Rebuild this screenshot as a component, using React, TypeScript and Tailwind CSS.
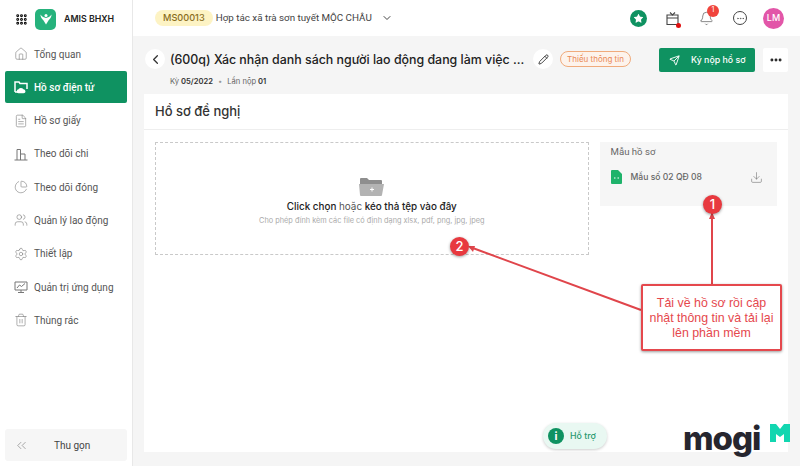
import { ChevronDown, ChevronLeft, ChevronsLeft, Download, Ellipsis, Bell, Send, Pencil, Home, FileText, PieChart, Users, Settings, Trash2, Star, Grip } from 'lucide-react';
import type { ReactNode } from 'react';

// ─── Hand-drawn sidebar icons (no package has these) ──────────────────────────

function Glyph({ children }: { children: ReactNode }) {
  return (
    <svg width="14" height="14" viewBox="0 0 14 14" fill="none" stroke="currentColor" strokeWidth="1">
      {children}
    </svg>
  );
}

const FolderImage = () => (
  <svg width="14" height="14" viewBox="0 0 14 14" fill="none" stroke="currentColor" strokeWidth="1.5">
    <path d="M1 12V2h4l1 1.5h7V9" />
    <path d="M1 12h3" />
    <path d="M4.5 12.5c-1.5 0-1.5-2.5.3-2.5.5-1.8 3.7-1.8 4.2 0 1.8-.3 2.5 2.5.5 2.5z" fill="currentColor" />
  </svg>
);

const Chart = () => (
  <Glyph>
    <path d="M0.5 13h13" />
    <path d="M3 13V2.5h3.5V13" />
    <path d="M6.5 7H11V13" />
  </Glyph>
);

const Monitor = () => (
  <Glyph>
    <path d="M1 2h12v8H1z" />
    <path d="M3 8l2.5-3 2 1.5L11 3.5" />
    <path d="M7 10v2M4 12.5h6" />
  </Glyph>
);

// ─── Sidebar ──────────────────────────────────────────────────────────────────

const NAV = [
  { label: 'Tổng quan', icon: <Home size={14} strokeWidth={1} /> },
  { label: 'Hồ sơ điện tử', icon: <FolderImage />, active: true },
  { label: 'Hồ sơ giấy', icon: <FileText size={14} strokeWidth={1} /> },
  { label: 'Theo dõi chi', icon: <Chart /> },
  { label: 'Theo dõi đóng', icon: <PieChart size={14} strokeWidth={1} /> },
  { label: 'Quản lý lao động', icon: <Users size={14} strokeWidth={1} /> },
  { label: 'Thiết lập', icon: <Settings size={14} strokeWidth={1} /> },
  { label: 'Quản trị ứng dụng', icon: <Monitor /> },
  { label: 'Thùng rác', icon: <Trash2 size={14} strokeWidth={1} /> },
];

function Sidebar() {
  return (
    <aside className="flex h-full w-[133px] shrink-0 flex-col border-r border-[#e8e8e8] bg-white font-['Roboto',sans-serif]">
      <div className="flex h-[38px] shrink-0 items-center pl-[15px]">
        <Grip size={13} strokeWidth={3.4} className="text-[#111]" />
        <div className="ml-[7px] flex h-[21px] w-[21px] items-center justify-center rounded-[5px] bg-[#26b27c]">
          <svg width="14" height="14" viewBox="0 0 14 14" fill="white">
            <circle cx="7" cy="3.6" r="1.5" />
            <path d="M1.5 2.5 C3 5 5 5.5 7 6 C9 5.5 11 5 12.5 2.5 C12.5 6 10 7.5 9.5 8.5 L7 12.5 L4.5 8.5 C4 7.5 1.5 6 1.5 2.5z" />
          </svg>
        </div>
        <span className="ml-[8px] font-['Inter',sans-serif] text-[8.8px] font-semibold text-[#222]">AMIS BHXH</span>
      </div>
      <nav className="flex flex-col gap-[1.3px] px-[5px]">
        {NAV.map((n) => (
          <div
            key={n.label}
            className={`flex h-[32px] items-center rounded-[2px] pl-[9px] text-[10px] ${n.active ? 'bg-[#0f9261] font-medium text-white' : 'text-[#555]'}`}
          >
            <span className={n.active ? 'text-white' : 'text-[#777]'}>{n.icon}</span>
            <span className="ml-[6px] whitespace-nowrap">{n.label}</span>
          </div>
        ))}
      </nav>
      <div className="mt-auto mb-[5px] ml-[5px] flex h-[32px] w-[122px] items-center rounded-[3px] bg-[#f6f6f6] pl-[9px] text-[10px] text-[#444]">
        <ChevronsLeft size={15} strokeWidth={1} className="text-[#777]" />
        <span className="ml-[25px]">Thu gọn</span>
      </div>
    </aside>
  );
}

// ─── Top bar ──────────────────────────────────────────────────────────────────

function TopBar() {
  return (
    <header className="flex h-[36px] shrink-0 items-center bg-white pl-[22px] pr-[16px]">
      <span className="rounded-full bg-[#fdf3c4] px-[8px] py-[1px] text-[9.2px] font-medium text-[#8a6d1c]">MS00013</span>
      <span className="ml-[3px] font-['Roboto',sans-serif] text-[9.8px] text-[#444]">Hợp tác xã trà sơn tuyết MỘC CHÂU</span>
      <ChevronDown size={12} className="ml-[9px] text-[#444]" />
      <div className="ml-auto flex items-center">
        <div className="flex h-[17px] w-[17px] items-center justify-center rounded-full bg-[#0f9261]">
          <Star size={11} fill="white" strokeWidth={0} />
        </div>
        <div className="relative ml-[18px]">
          <svg width="15" height="15" viewBox="0 0 15 15" fill="none" stroke="#444" strokeWidth="1.1">
            <path d="M2 4h11v9.5H2z" />
            <path d="M2 7h11M5 1.5L7.5 4 10 1.5" />
          </svg>
          <span className="absolute -bottom-[2px] -right-[1px] h-[5px] w-[5px] rounded-full bg-[#e01010]" />
        </div>
        <div className="relative ml-[19px]">
          <Bell size={15} strokeWidth={1.1} className="text-[#555]" />
          <span className="absolute -right-[5px] -top-[6px] flex h-[12px] w-[12px] items-center justify-center rounded-full bg-[#f0443c] text-[7px] text-white">1</span>
        </div>
        <div className="ml-[19px] flex h-[14px] w-[14px] items-center justify-center rounded-full border border-[#444] text-[#444]">
          <Ellipsis size={9} strokeWidth={1.5} />
        </div>
        <div className="ml-[16px] flex h-[21px] w-[21px] items-center justify-center rounded-full bg-[#e256a8] text-[9px] font-medium text-white">LM</div>
      </div>
    </header>
  );
}

// ─── Page heading and card ────────────────────────────────────────────────────

function PageHead() {
  return (
    <div className="flex h-[58px] shrink-0 items-start pl-[12px] pr-[12px] pt-[13px]">
      <div className="flex h-[20px] w-[20px] shrink-0 items-center justify-center rounded-full bg-white">
        <ChevronLeft size={15} className="text-[#333]" />
      </div>
      <div className="ml-[5px] w-[352px] shrink-0">
        <div className="whitespace-nowrap text-[12.4px] font-medium leading-[22px] text-[#222]">(600q) Xác nhận danh sách người lao động đang làm việc ...</div>
        <div className="mt-[5px] flex items-center text-[7.6px] text-[#666]">
          Kỳ <b className="ml-[2px] font-semibold text-[#333]">05/2022</b>
          <span className="mx-[5px] text-[#999]">•</span>
          Lần nộp <b className="ml-[2px] font-semibold text-[#333]">01</b>
        </div>
      </div>
      <div className="ml-[11px] flex h-[20px] w-[20px] shrink-0 items-center justify-center rounded-full bg-white">
        <Pencil size={11} className="text-[#333]" />
      </div>
      <span className="ml-[7px] mt-[2px] flex h-[16px] w-[71px] shrink-0 items-center justify-center rounded-full border border-[#f0ab7c] bg-[#fdf3ec] text-[8px] text-[#ea8a55]">Thiếu thông tin</span>
      <button className="ml-auto -mt-[1px] flex h-[24px] w-[96px] shrink-0 items-center rounded-[2px] bg-[#0f9261] pl-[10px] text-[8.8px] font-medium text-white">
        <Send size={11} />
        <span className="ml-[11px]">Ký nộp hồ sơ</span>
      </button>
      <button className="ml-[8px] -mt-[1px] flex h-[24px] w-[25px] shrink-0 items-center justify-center rounded-[2px] bg-white text-[#222]">
        <Ellipsis size={14} strokeWidth={3} />
      </button>
    </div>
  );
}

function Card() {
  return (
    <section className="relative ml-[11px] mr-[12px] flex min-h-0 flex-1 flex-col bg-white">
      <div className="flex h-[36px] shrink-0 items-center border-b border-[#eeeeee] px-[11px] pt-[1px] text-[13px] font-medium text-[#333]">Hồ sơ đề nghị</div>
      <div className="flex items-start px-[11px] pt-[12px]">
        <div className="flex h-[113px] w-[435px] flex-col items-center border border-dashed border-[#c9c9c9] pt-[34px]">
          <svg width="25" height="19" viewBox="0 0 25 19">
            <path d="M1 2a1 1 0 0 1 1-1h6l2 2h12a1 1 0 0 1 1 1v3H1z" fill="#8e8e8e" />
            <path d="M0 7h25l-2 11a1 1 0 0 1-1 1H2a1 1 0 0 1-1-1z" fill="#b3b3b3" />
            <path d="M11 12.5h4M13 10.5v4" stroke="white" strokeWidth="1" />
          </svg>
          <div className="mt-[3px] text-[9.9px] font-medium text-[#222]">
            Click chọn <span className="font-normal text-[#555]">hoặc</span> kéo thả tệp vào đây
          </div>
          <div className="mt-[1px] text-[7.35px] text-[#aaa]">Cho phép đính kèm các file có định dạng xlsx, pdf, png, jpg, jpeg</div>
        </div>
        <div className="ml-[11px] h-[64px] w-[178px] bg-[#f6f6f6] px-[11px] pt-[3px]">
          <div className="font-['Roboto',sans-serif] text-[9.6px] text-[#666]">Mẫu hồ sơ</div>
          <div className="mt-[11px] flex items-center">
            <svg width="11" height="14" viewBox="0 0 11 14">
              <path d="M1 0h6l4 4v9a1 1 0 0 1-1 1H1a1 1 0 0 1-1-1V1a1 1 0 0 1 1-1z" fill="#1fb36b" />
              <path d="M3 8h1.5M6.5 8H8" stroke="white" strokeWidth="1" />
            </svg>
            <span className="ml-[9px] text-[8.6px] font-medium text-[#666]">Mẫu số 02 QĐ 08</span>
            <Download size={13} strokeWidth={1} className="ml-auto mr-[3px] text-[#666]" />
          </div>
        </div>
      </div>
      <div className="absolute left-[399px] top-[329px] flex h-[26px] items-center rounded-full bg-[#e9f8f2] pl-[5px] pr-[11px] shadow-[0_1px_3px_rgba(0,0,0,0.2)]">
        <div className="flex h-[16px] w-[16px] items-center justify-center rounded-full bg-[#0f9261]">
          <span className="text-[11px] font-bold leading-none text-white">i</span>
        </div>
        <span className="ml-[6px] text-[8.8px] font-medium text-[#2a9a70]">Hỗ trợ</span>
      </div>
    </section>
  );
}

// ─── Annotations pasted over the screenshot ───────────────────────────────────

function Badge({ n, className }: { n: number; className: string }) {
  return (
    <div className={`absolute flex h-[19px] w-[19px] items-center justify-center rounded-full bg-[#e8393f] text-[13px] font-medium text-white shadow-[0_1px_3px_rgba(0,0,0,0.4)] ${className}`}>{n}</div>
  );
}

function Annotations() {
  return (
    <>
      <svg className="absolute inset-0" width="800" height="466" fill="none">
        <path d="M712 213V284" stroke="#e0454b" strokeWidth="2" />
        <path d="M712 212l-3 7h6z" fill="#e0454b" />
        <path d="M470 247L641 310" stroke="#e0454b" strokeWidth="2" />
        <path d="M468 246l7 0-2 6z" fill="#e0454b" />
      </svg>
      <Badge n={1} className="left-[703px] top-[195px]" />
      <Badge n={2} className="left-[450px] top-[237px]" />
      <div className="absolute left-[641px] top-[284px] flex h-[67px] w-[141px] items-center justify-center rounded-[2px] border-2 border-[#e5484d] bg-white px-[4px] pt-[1px] text-center font-['Liberation_Sans',sans-serif] text-[12.4px] leading-[15px] text-[#e5484d] shadow-[0_1px_3px_rgba(0,0,0,0.4)]">
        Tải về hồ sơ rồi cập nhật thông tin và tải lại lên phần mềm
      </div>
      <div className="absolute left-[683px] top-[420px] flex items-start">
        <span className="text-[33px] font-extrabold leading-[36px] tracking-[-1px] text-[#26262f]">mogi</span>
        <svg width="20" height="18" viewBox="0 0 20 18" className="ml-[10px] mt-[4px]">
          <path d="M0 0h6l4 5 4-5h6v18h-6V10l-4 3-4-3v8H0z" fill="#12d6b0" />
        </svg>
      </div>
    </>
  );
}

export default function App() {
  return (
    <div className="relative flex h-[466px] w-[800px] overflow-hidden bg-[#f5f5f5] font-['Inter',sans-serif]">
      <Sidebar />
      <main className="flex min-w-0 flex-1 flex-col pb-[14px]">
        <TopBar />
        <PageHead />
        <Card />
      </main>
      <Annotations />
    </div>
  );
}
